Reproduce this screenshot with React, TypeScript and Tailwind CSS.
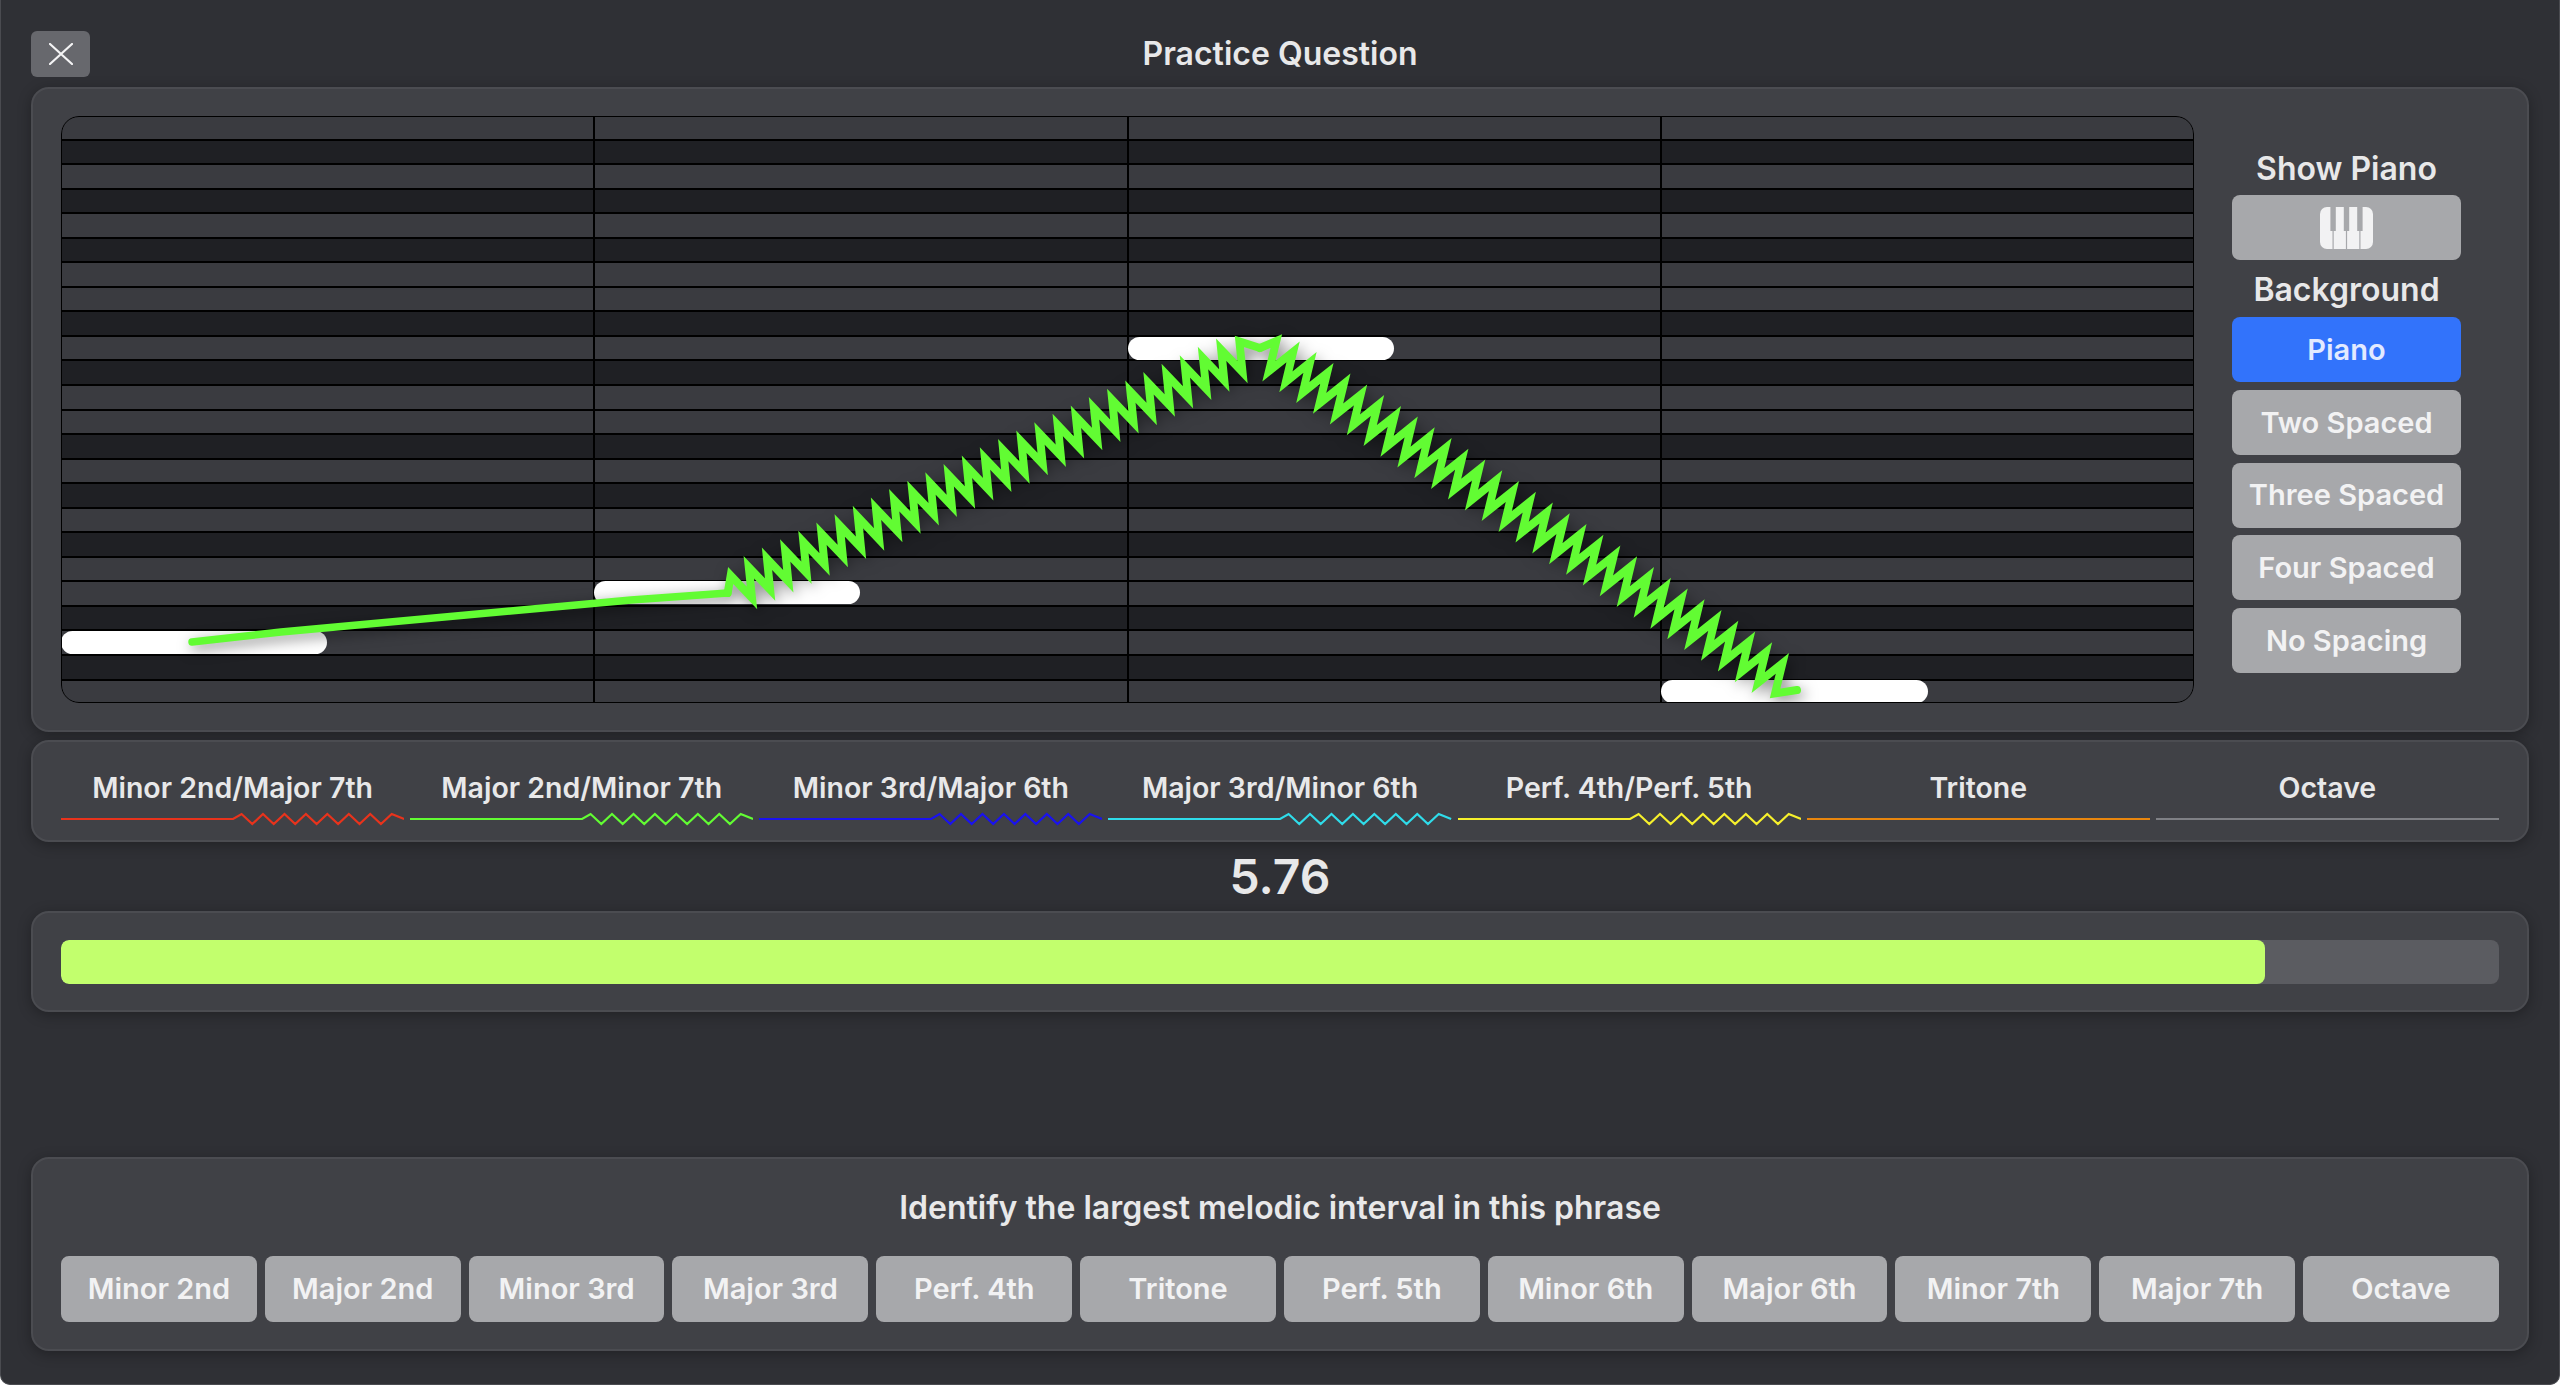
import React from "react";

const zig = (sx: number, sy: number, ex: number, ey: number, amp: number) => {
  const dx = ex - sx, dy = ey - sy, len = Math.hypot(dx, dy);
  const ux = dx / len, uy = dy / len;
  let nx = -uy, ny = ux;
  if (ny > 0) { nx = -nx; ny = -ny; }
  let d = `M${sx} ${sy}`;
  let sign = 1;
  for (let t = 10; t < len - 10; t += 10) {
    const x = sx + ux * t + nx * amp * sign;
    const y = sy + uy * t + ny * amp * sign;
    d += ` L${x.toFixed(1)} ${y.toFixed(1)}`;
    sign = -sign;
  }
  d += ` L${ex} ${ey}`;
  return d;
};

const legendZig = () => {
  let d = "M0 8 L172 8 L180.5 3";
  let up = false;
  for (let x = 191.2; x < 336; x += 10.72) {
    d += ` L${x.toFixed(1)} ${up ? 3 : 13}`;
    up = !up;
  }
  d += " L343 8";
  return d;
};

const rowPattern = [1, 0, 1, 0, 1, 0, 1, 1, 0, 1, 0, 1, 1, 0, 1, 0, 1, 0, 1, 1, 0, 1, 0, 1];

const legend = [
  { label: "Minor 2nd/Major 7th", color: "#e8331c", zig: true },
  { label: "Major 2nd/Minor 7th", color: "#62fc33", zig: true },
  { label: "Minor 3rd/Major 6th", color: "#1a12f0", zig: true },
  { label: "Major 3rd/Minor 6th", color: "#2fdcea", zig: true },
  { label: "Perf. 4th/Perf. 5th", color: "#f6f02c", zig: true },
  { label: "Tritone", color: "#e8860e", zig: false },
  { label: "Octave", color: "#7f8085", zig: false },
];

const answers = ["Minor 2nd", "Major 2nd", "Minor 3rd", "Major 3rd", "Perf. 4th", "Tritone", "Perf. 5th", "Minor 6th", "Major 6th", "Minor 7th", "Major 7th", "Octave"];
const backgrounds = ["Two Spaced", "Three Spaced", "Four Spaced", "No Spacing"];

const panel = "rounded-[18px] border-2 border-[#4b4c51] bg-[#404146] shadow-[0_3px_14px_rgba(0,0,0,0.3)]";

function PianoIcon() {
  return (
    <svg width="53" height="42" viewBox="0 0 53 42">
      <rect x="0" y="0" width="53" height="42" rx="7" fill="#f2f2f3" />
      <rect x="10.4" y="0" width="5.4" height="24" fill="#a7a8ab" />
      <rect x="23.8" y="0" width="5.4" height="24" fill="#a7a8ab" />
      <rect x="37.2" y="0" width="5.4" height="24" fill="#a7a8ab" />
      <rect x="12.5" y="24" width="1.2" height="18" fill="#a7a8ab" />
      <rect x="25.9" y="24" width="1.2" height="18" fill="#a7a8ab" />
      <rect x="39.3" y="24" width="1.2" height="18" fill="#a7a8ab" />
    </svg>
  );
}

export default function App() {
  return (
    <div className="h-[1385px] w-full overflow-hidden rounded-b-[10px] border-x border-b border-[#4a4b50] bg-[#2f3035] px-[30px] pt-[31px] font-['Inter','Liberation_Sans',sans-serif] font-semibold text-[#e8e8e9]">
      <div className="grid h-[46px] grid-cols-[1fr_auto_1fr] items-center">
        <button className="flex h-[46px] w-[59px] items-center justify-center rounded-[6px] bg-[#67686d]">
          <svg width="24" height="22" viewBox="0 0 24 22">
            <path d="M1 1 L23 21 M23 1 L1 21" stroke="#f4f4f5" strokeWidth="2.2" strokeLinecap="round" fill="none" />
          </svg>
        </button>
        <div className="text-[32px] leading-none">Practice Question</div>
        <div />
      </div>

      <section className={`mt-[10px] flex h-[645px] items-start pl-[28px] pt-[27px] ${panel}`}>
        <div className="relative h-[587px] w-[2133px] shrink-0 overflow-hidden rounded-[18px]">
          <div className="flex h-full flex-col">
            {rowPattern.map((light, i) => (
              <div key={i} className={`flex-1 ${i < 23 ? "border-b-2 border-black" : ""} ${light ? "bg-[#3a3b40]" : "bg-[#1f2024]"}`} />
            ))}
          </div>
          <div className="absolute inset-y-0 left-[-1px] right-[1px] grid grid-cols-4">
            <div />
            <div className="border-l-2 border-black" />
            <div className="border-l-2 border-black" />
            <div className="border-l-2 border-black" />
          </div>
          <div className="absolute left-0 top-[515px] h-[23px] w-[266px] rounded-[12px] bg-white" />
          <div className="absolute left-[533px] top-[465px] h-[23px] w-[266px] rounded-[12px] bg-white" />
          <div className="absolute left-[1067px] top-[221px] h-[23px] w-[266px] rounded-[12px] bg-white" />
          <div className="absolute left-[1600px] top-[564px] h-[23px] w-[267px] rounded-[12px] bg-white" />
          <svg className="absolute inset-0 drop-shadow-[3px_4px_7px_rgba(0,0,0,0.5)]" width="2133" height="587" viewBox="61 116 2133 587" fill="none">
            <path d="M192 642 L281 632 L631 600 L727.7 593" stroke="#62fc33" strokeWidth="7.4" strokeLinecap="round" strokeLinejoin="round" />
            <path d={zig(727.7, 593, 1260, 348, 14.6)} stroke="#62fc33" strokeWidth="8" strokeLinecap="round" strokeLinejoin="miter" strokeMiterlimit="10" />
            <path d={zig(1260, 348, 1797, 690, 14.6)} stroke="#62fc33" strokeWidth="8" strokeLinecap="round" strokeLinejoin="miter" strokeMiterlimit="10" />
          </svg>
          <div className="pointer-events-none absolute inset-0 rounded-[18px] border-[1.5px] border-black" />
        </div>
        <div className="ml-[38px] flex w-[229px] shrink-0 flex-col items-stretch pt-[28px]">
          <div className="h-[51px] text-center text-[32px] leading-[49px]">Show Piano</div>
          <button className="flex h-[65px] items-center justify-center rounded-[8px] bg-[#a7a8ab]">
            <PianoIcon />
          </button>
          <div className="h-[57px] text-center text-[32px] leading-[60px]">Background</div>
          <div className="flex flex-col gap-[7.75px]">
            <button className="h-[65px] rounded-[8px] bg-[#3273fb] text-[29px] text-[#e2eaff]">Piano</button>
            {backgrounds.map((b) => (
              <button key={b} className="h-[65px] rounded-[8px] bg-[#a7a8ab] text-[29px] text-[#f2f2f3]">{b}</button>
            ))}
          </div>
        </div>
      </section>

      <section className={`mt-[7.5px] flex h-[102px] gap-[6px] px-[28px] pt-[27px] ${panel}`}>
        {legend.map((l) => (
          <div key={l.label} className="flex min-w-0 flex-1 flex-col items-center">
            <div className="h-[38px] whitespace-nowrap text-[28.5px] leading-[38px]">{l.label}</div>
            <svg className="mt-[4px] w-full" height="16" viewBox="0 0 343 16" preserveAspectRatio="none" fill="none">
              <path d={l.zig ? legendZig() : "M0 8 L343 8"} stroke={l.color} strokeWidth="2.2" strokeLinejoin="miter" />
            </svg>
          </div>
        ))}
      </section>

      <div className="flex h-[69.5px] items-center justify-center pt-[2px] text-[48px] font-semibold leading-none">5.76</div>

      <section className={`h-[101px] px-[28px] pt-[27px] ${panel}`}>
        <div className="h-[44px] overflow-hidden rounded-[8px] bg-[#5b5c61]">
          <div className="h-full w-[90.4%] rounded-[8px] bg-[#c2ff6d]" />
        </div>
      </section>

      <section className={`mt-[145px] h-[194px] px-[28px] pt-[27px] ${panel}`}>
        <div className="flex h-[70px] items-start justify-center text-[32px] leading-[44px]">Identify the largest melodic interval in this phrase</div>
        <div className="flex gap-[8px]">
          {answers.map((a) => (
            <button key={a} className="h-[66px] flex-1 rounded-[8px] bg-[#a7a8ab] text-[29px] text-[#f2f2f3]">{a}</button>
          ))}
        </div>
      </section>
    </div>
  );
}
